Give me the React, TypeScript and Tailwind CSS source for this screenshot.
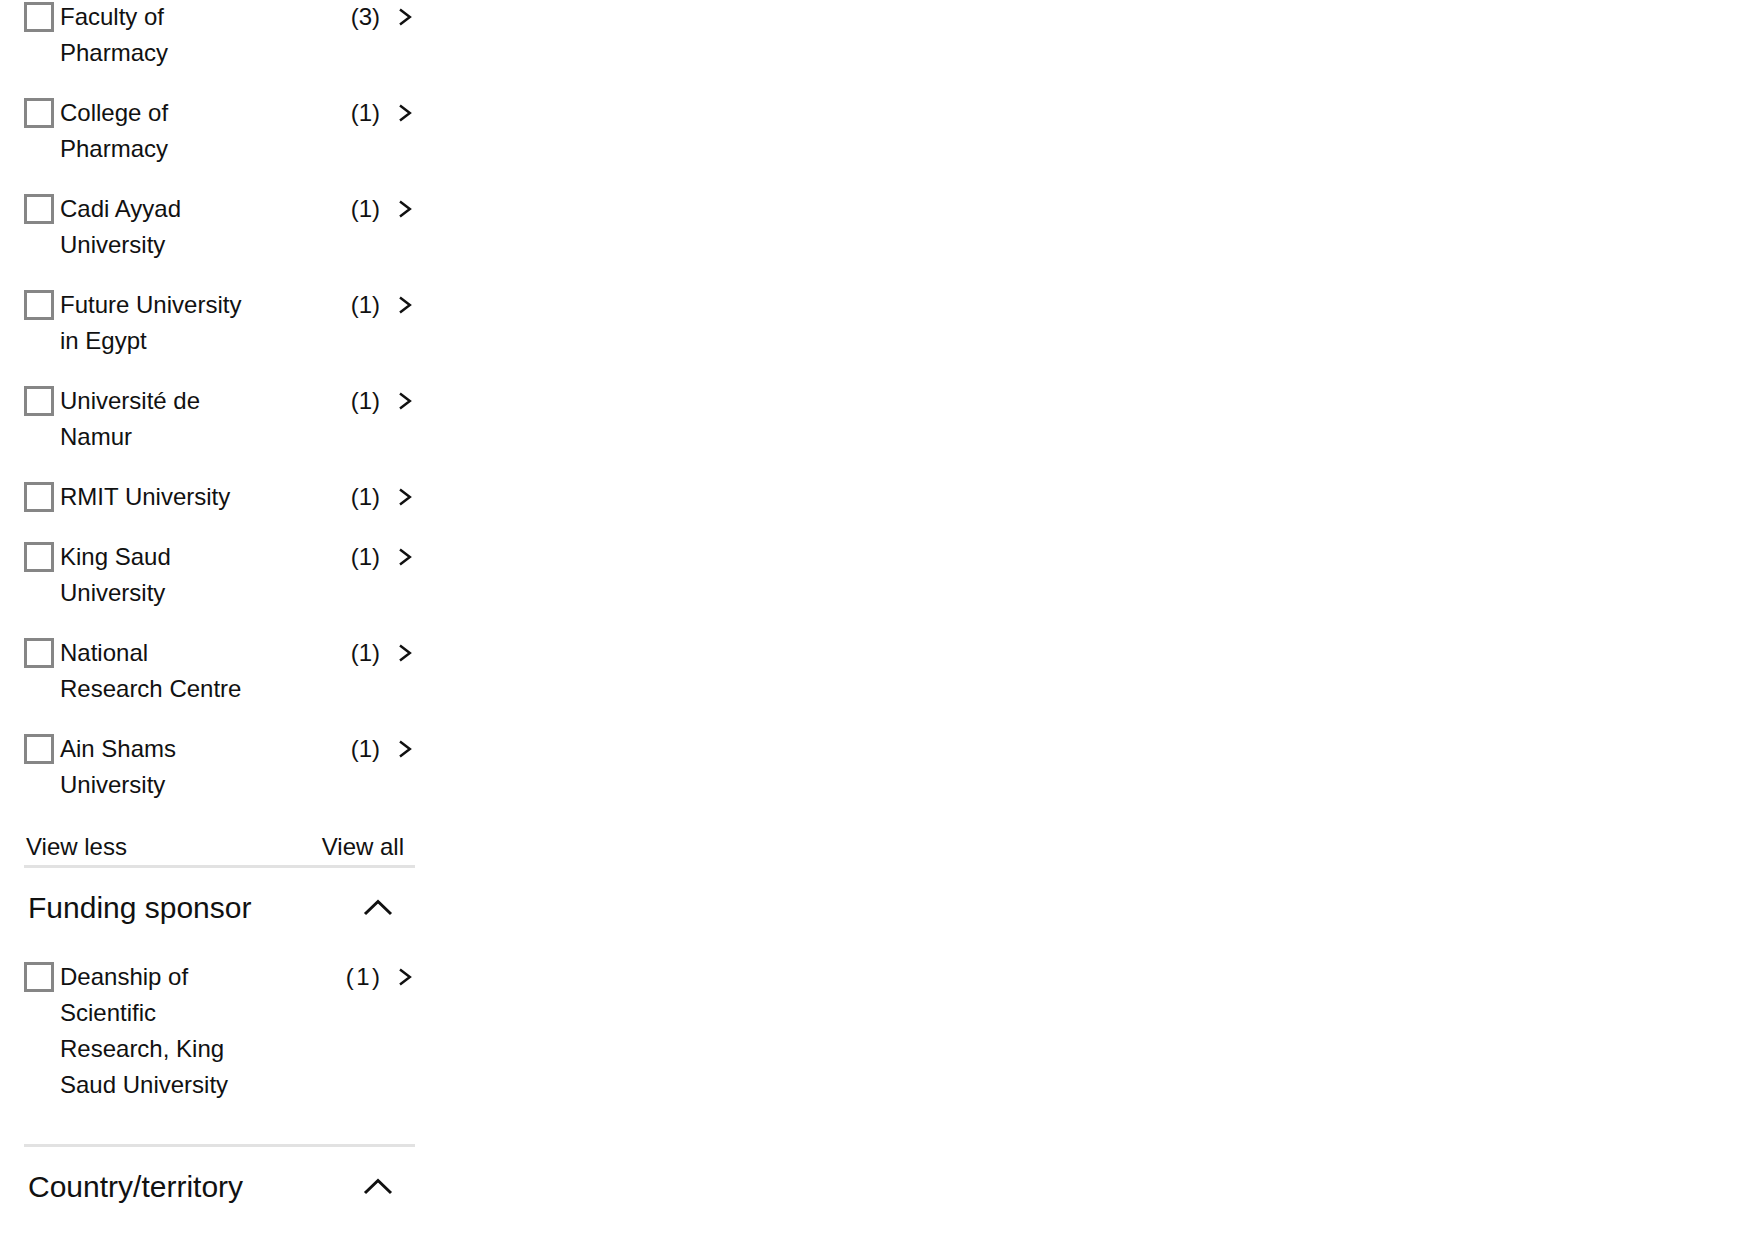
const affiliations = [
  { name: 'Faculty of Pharmacy', count: 3 },
  { name: 'College of Pharmacy', count: 1 },
  { name: 'Cadi Ayyad University', count: 1 },
  { name: 'Future University in Egypt', count: 1 },
  { name: 'Université de Namur', count: 1 },
  { name: 'RMIT University', count: 1 },
  { name: 'King Saud University', count: 1 },
  { name: 'National Research Centre', count: 1 },
  { name: 'Ain Shams University', count: 1 },
];

function ChevronRight() {
  return (
    <svg width="14" height="18" viewBox="0 0 14 18" fill="none">
      <polyline points="2,1.6 11.8,9 2,16.4" stroke="#111" strokeWidth="2.5" strokeLinejoin="miter" />
    </svg>
  );
}

function ChevronUp() {
  return (
    <svg width="30" height="17" viewBox="0 0 30 17" fill="none">
      <polyline points="2,15 15,2.5 28,15" stroke="#111" strokeWidth="3" strokeLinejoin="miter" />
    </svg>
  );
}

function FilterRow({ name, count, spaced }: { name: string; count: number; spaced?: boolean }) {
  return (
    <div className="flex items-start">
      <span className="mt-[3px] h-[30px] w-[30px] shrink-0 border-[3px] border-[#868686] bg-white" />
      <span className="ml-[6px] w-[190px] text-[24px] leading-[36px]">{name}</span>
      <span
        className={`ml-auto text-[24px] leading-[36px] ${spaced ? 'mr-[-2.5px] tracking-[2.5px]' : ''}`}
      >
        ({count})
      </span>
      <span className="ml-[18px] mr-[3px] flex h-[36px] items-center">
        <ChevronRight />
      </span>
    </div>
  );
}

function SectionHeader({ title }: { title: string }) {
  return (
    <div className="flex h-[45px] items-center justify-between pl-[4px] pr-[22px]">
      <h3 className="text-[30px] leading-[45px] font-normal">{title}</h3>
      <ChevronUp />
    </div>
  );
}

export default function App() {
  return (
    <div
      className="min-h-[1239px] w-full bg-white text-[#111]"
      style={{ fontFamily: '"Liberation Sans", Arial, sans-serif' }}
    >
      <div className="-mt-[1px] ml-[24px] w-[391px]">
        {/* Affiliation list */}
        <div className="flex flex-col gap-6">
          {affiliations.map((a) => (
            <FilterRow key={a.name} name={a.name} count={a.count} />
          ))}
        </div>

        <div className="mt-[26px] flex justify-between border-b-[3px] border-[#e2e2e2] pl-[2px] pr-[11px] text-[24px] leading-[36px]">
          <span>View less</span>
          <span>View all</span>
        </div>

        {/* Funding sponsor */}
        <div className="border-b-[3px] border-[#e2e2e2] pt-[17px] pb-[41px]">
          <SectionHeader title="Funding sponsor" />
          <div className="mt-[29px]">
            <FilterRow name="Deanship of Scientific Research, King Saud University" count={1} spaced />
          </div>
        </div>

        {/* Country/territory */}
        <div className="pt-[17px]">
          <SectionHeader title="Country/territory" />
        </div>
      </div>
    </div>
  );
}
